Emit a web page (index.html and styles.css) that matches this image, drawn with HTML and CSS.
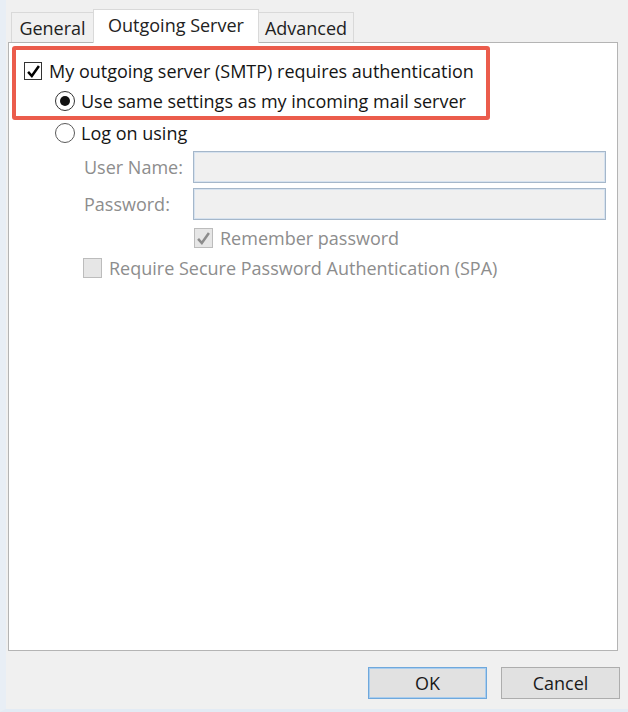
FILE: index.html
```html
<!DOCTYPE html>
<html lang="en">
<head>
    <meta charset="UTF-8">
    <title>More Settings</title>
    <link rel="stylesheet" href="styles.css">
</head>
<body>
    <div class="window">
        <div class="tabs">
            <div class="tab tab-general">General</div>
            <div class="tab tab-outgoing active">Outgoing Server</div>
            <div class="tab tab-advanced">Advanced</div>
        </div>

        <div class="panel">
            <div class="highlight">
                <div class="row row-auth">
                    <span class="check checked">
                        <svg viewBox="0 0 18 18" width="15" height="15"><path d="M2.5 9.5 L7 14.5 L15.5 2.5" fill="none" stroke="#000" stroke-width="3"/></svg>
                    </span>
                    <span class="label">My outgoing server (SMTP) requires authentication</span>
                </div>
                <div class="row row-radio">
                    <span class="radio selected"><span class="dot"></span></span>
                    <span class="label">Use same settings as my incoming mail server</span>
                </div>
            </div>

            <div class="row row-radio row-logon">
                <span class="radio"></span>
                <span class="label">Log on using</span>
            </div>

            <div class="field">
                <span class="field-label">User Name:</span>
                <div class="textbox"></div>
            </div>
            <div class="field">
                <span class="field-label">Password:</span>
                <div class="textbox"></div>
            </div>

            <div class="row row-remember disabled">
                <span class="check">
                    <svg viewBox="0 0 18 18" width="15" height="15"><path d="M2.5 9.5 L7 14.5 L15.5 2.5" fill="none" stroke="#8c8c8c" stroke-width="3"/></svg>
                </span>
                <span class="label">Remember password</span>
            </div>
            <div class="row row-spa disabled">
                <span class="check"></span>
                <span class="label">Require Secure Password Authentication (SPA)</span>
            </div>
        </div>

        <div class="buttons">
            <button class="btn btn-default">OK</button>
            <button class="btn">Cancel</button>
        </div>
    </div>
</body>
</html>
```

FILE: styles.css
```css
body {
    margin: 0;
    background-color: #f0f0f0;
    font-family: "Open Sans", "Noto Sans", sans-serif;
    font-size: 18px;
    color: #151515;
}
.window {
    width: 628px;
    height: 712px;
    box-sizing: border-box;
    padding: 9px 0 0 2px;
    border-left: 6px solid #e8eef5;
    border-bottom: 3px solid #e3ebf4;
}
.tabs {
    display: flex;
    align-items: flex-end;
    height: 33px;
    padding-left: 3px;
}
.tab {
    height: 30px;
    box-sizing: border-box;
    border: 1px solid #d9d9d9;
    border-bottom: none;
    background-color: #f0f0f0;
    text-align: center;
    line-height: 30px;
    color: #222;
}
.tab + .tab {
    margin-left: -1px;
}
.tab-general {
    width: 83px;
}
.tab-outgoing {
    width: 166px;
}
.tab-advanced {
    width: 96px;
}
.tab.active {
    height: 34px;
    margin-bottom: -1px;
    background-color: #fff;
    position: relative;
    z-index: 1;
    line-height: 30px;
}
.panel {
    width: 610px;
    height: 609px;
    box-sizing: border-box;
    background-color: #fff;
    border: 1px solid #b4b4b4;
    padding: 3px;
}
.highlight {
    width: 478px;
    box-sizing: border-box;
    border: 4px solid #eb5c4c;
    border-radius: 3px;
    padding: 6px 0 0 0;
}
.row {
    display: flex;
    align-items: center;
    height: 30px;
}
.row-auth {
    padding-left: 8px;
}
.row-auth .label {
    margin-left: 7px;
}
.row-radio {
    padding-left: 39px;
}
.row-radio .label {
    margin-left: 6px;
}
.row-logon {
    height: 26px;
    padding-left: 43px;
}
.check {
    width: 18px;
    height: 18px;
    box-sizing: border-box;
    border: 1px solid #333;
    background-color: #fff;
    display: flex;
    align-items: center;
    justify-content: center;
    flex-shrink: 0;
}
.radio {
    width: 20px;
    height: 20px;
    box-sizing: border-box;
    border: 1px solid #5a5a5a;
    border-radius: 50%;
    background-color: #fff;
    display: flex;
    align-items: center;
    justify-content: center;
    flex-shrink: 0;
}
.radio.selected {
    border-color: #333;
}
.radio .dot {
    width: 10px;
    height: 10px;
    border-radius: 50%;
    background-color: #111;
}
.field {
    display: flex;
    align-items: center;
    margin-top: 5px;
    padding-left: 72px;
}
.field-label {
    width: 109px;
    color: #8d8d8d;
}
.textbox {
    width: 413px;
    height: 32px;
    box-sizing: border-box;
    border: 1px solid #a5b7ca;
    box-shadow: inset 0 0 0 1px #d6e2ef;
    background-color: #f0f0f0;
}
.disabled .label {
    color: #8d8d8d;
}
.disabled .check {
    border-color: #bcbcbc;
    background-color: #e6e6e6;
    width: 19px;
    height: 20px;
}
.row-remember {
    margin-top: 3px;
    padding-left: 182px;
}
.row-remember .label {
    margin-left: 7px;
}
.row-spa {
    padding-left: 71px;
}
.row-spa .label {
    margin-left: 7px;
}
.buttons {
    display: flex;
    justify-content: flex-end;
    gap: 14px;
    margin-top: 16px;
    width: 612px;
}
.btn {
    width: 119px;
    height: 32px;
    font-family: inherit;
    font-size: 18px;
    color: #1a1a1a;
    background-color: #e1e1e1;
    border: 1px solid #adadad;
    padding: 0;
}
.btn-default {
    border: 1px solid #6fa8dc;
    box-shadow: inset 0 0 0 1px #a9cdee;
}
```
